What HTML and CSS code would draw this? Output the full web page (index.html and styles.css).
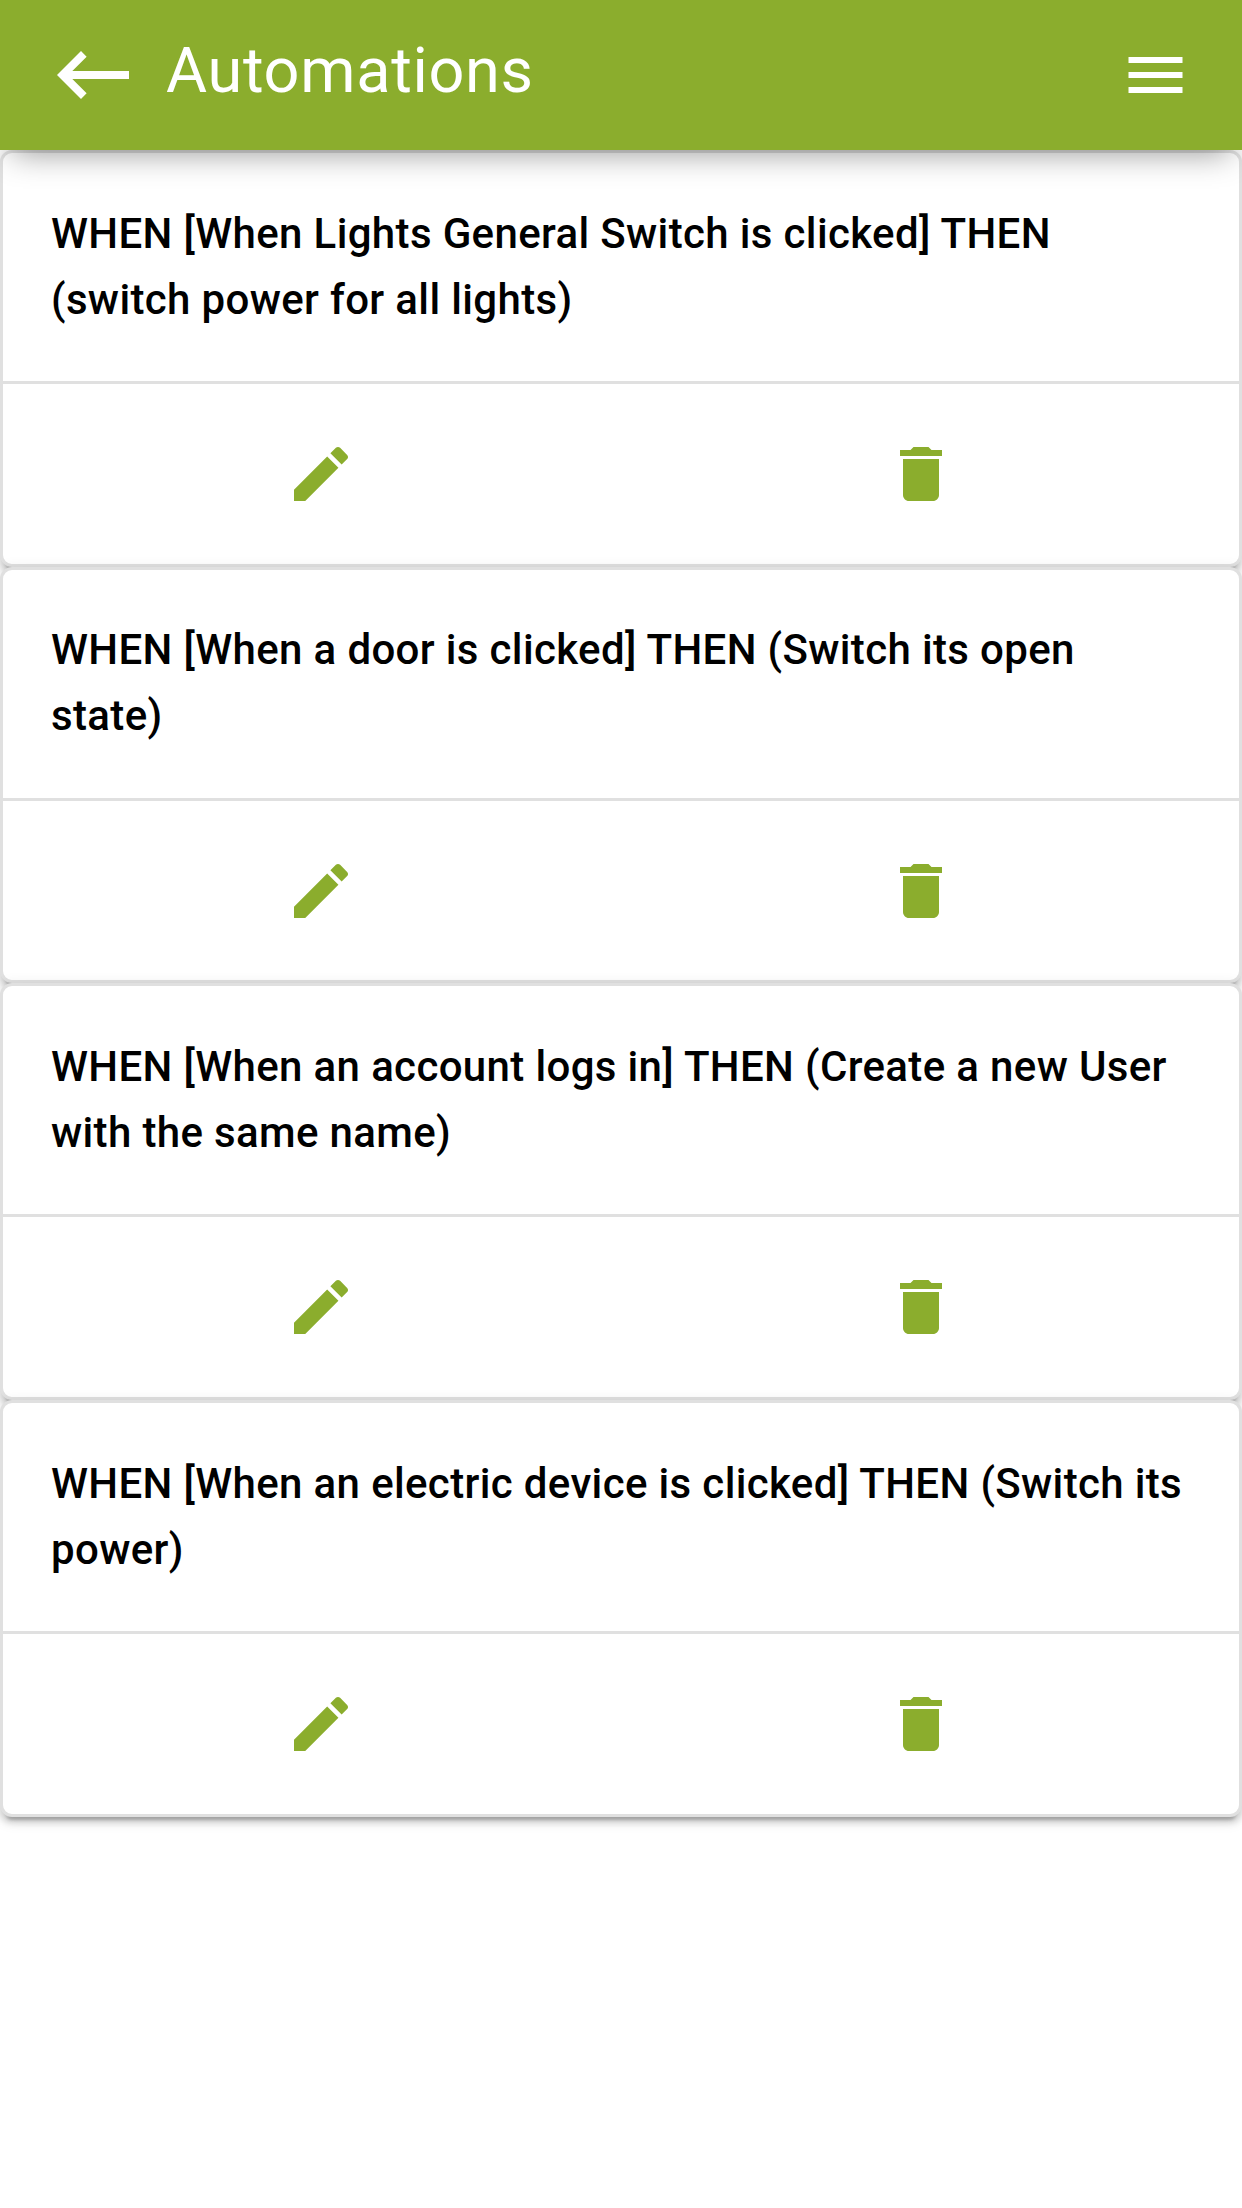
FILE: index.html
```html
<!DOCTYPE html>
<html lang="en">
<head>
<meta charset="utf-8">
<title>Automations</title>
<link rel="stylesheet" href="styles.css">
</head>
<body>
<svg class="sprite" aria-hidden="true">
  <symbol id="edit" viewBox="0 0 24 24"><path d="M3 17.25V21h3.75L17.81 9.94l-3.75-3.75L3 17.25zM20.71 7.04c.39-.39.39-1.02 0-1.41l-2.34-2.34c-.39-.39-1.02-.39-1.41 0l-1.83 1.83 3.75 3.75 1.83-1.83z"/></symbol>
  <symbol id="delete" viewBox="0 0 24 24"><path d="M6 19c0 1.1.9 2 2 2h8c1.1 0 2-.9 2-2V7H6v12zM19 4h-3.5l-1-1h-5l-1 1H5v2h14V4z"/></symbol>
</svg>
<header class="top-bar">
  <svg class="back-icon" viewBox="0 0 24 24"><path d="M21 11H6.83l3.58-3.59L9 6l-6 6 6 6 1.41-1.41L6.83 13H21z"/></svg>
  <h1 class="title">Automations</h1>
  <svg class="icon menu-icon" viewBox="-0.1667 0 24 24"><path d="M3 18h18v-2H3v2zm0-5h18v-2H3v2zm0-7v2h18V6H3z"/></svg>
</header>
<main class="list">
  <article class="card">
    <h2 class="rule">WHEN [When Lights General Switch is clicked] THEN (switch power for all lights)</h2>
    <div class="actions"><svg class="icon"><use href="#edit"/></svg><svg class="icon"><use href="#delete"/></svg></div>
  </article>
  <article class="card">
    <h2 class="rule">WHEN [When a door is clicked] THEN (Switch its open state)</h2>
    <div class="actions"><svg class="icon"><use href="#edit"/></svg><svg class="icon"><use href="#delete"/></svg></div>
  </article>
  <article class="card">
    <h2 class="rule">WHEN [When an account logs in] THEN (Create a new User with the same name)</h2>
    <div class="actions"><svg class="icon"><use href="#edit"/></svg><svg class="icon"><use href="#delete"/></svg></div>
  </article>
  <article class="card">
    <h2 class="rule">WHEN [When an electric device is clicked] THEN (Switch its power)</h2>
    <div class="actions"><svg class="icon"><use href="#edit"/></svg><svg class="icon"><use href="#delete"/></svg></div>
  </article>
</main>
</body>
</html>
```
FILE: styles.css
```css
* { box-sizing: border-box; }
body {
  margin: 0;
  min-height: 2208px;
  background: #fff;
  color: #000;
  font-family: Roboto, sans-serif;
}
.sprite { display: none; }
.icon { display: block; width: 72px; height: 72px; fill: #8bad2d; }
.top-bar {
  position: relative;
  z-index: 1;
  display: flex;
  align-items: center;
  height: 150px;
  padding: 0 51px 0 45px;
  background: #8bad2d;
  color: #fff;
  box-shadow: 0 15px 30px -12px rgba(0,0,0,.41);
}
.back-icon { width: 96px; height: 96px; fill: #fff; }
.title {
  margin: 0 0 8px 25px;
  font-size: 63px;
  font-weight: 400;
  line-height: 84px;
  letter-spacing: 0.7px;
}
.menu-icon { margin-left: auto; fill: #fff; }
.card {
  height: 416.67px;
  border: 3px solid #e0e0e0;
  border-radius: 12px;
  background: #fff;
  box-shadow: 0 9px 3px -6px rgba(0,0,0,.2), 0 6px 6px 0 rgba(0,0,0,.14), 0 3px 15px 0 rgba(0,0,0,.12);
}
.rule {
  margin: 0;
  padding: 47.7px 48px 48.3px;
  border-bottom: 3px solid #e0e0e0;
  font-size: 42px;
  font-weight: 500;
  line-height: 66px;
  letter-spacing: 0.35px;
}
.actions {
  display: flex;
  justify-content: space-around;
  align-items: center;
  height: 180px;
  padding: 0 18px;
}
```
